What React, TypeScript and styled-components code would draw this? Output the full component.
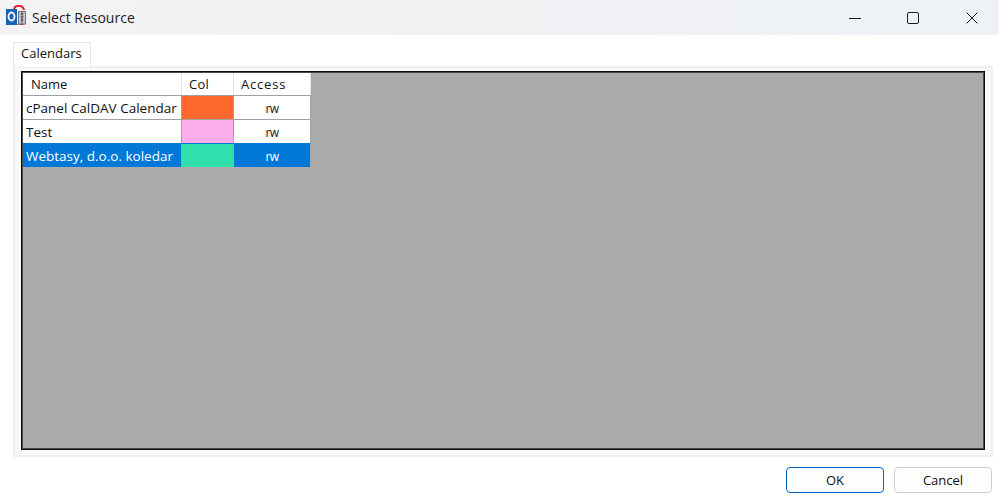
import React from "react";
import styled, { createGlobalStyle } from "styled-components";

const GlobalStyle = createGlobalStyle`
  html, body {
    margin: 0;
    padding: 0;
    background: #fff;
  }
  body {
    font-family: "Open Sans", "Liberation Sans", Arial, sans-serif;
  }
`;

const Dialog = styled.div`
  width: 999px;
  height: 498px;
  display: flex;
  flex-direction: column;
  overflow: hidden;
  background: #fff;
  color: #111;
`;

const TitleBar = styled.div`
  height: 35px;
  flex: none;
  display: flex;
  align-items: center;
  background: linear-gradient(90deg, #f3f3f3 0%, #f1f2f4 45%, #eef2f7 100%);
`;

const AppIcon = styled.svg`
  width: 20px;
  height: 20px;
  margin: 0 0 5px 6px;
  flex: none;
`;

const Title = styled.div`
  margin: 0 0 1px 6px;
  font-size: 14px;
  color: #1c1c1c;
  flex: 1;
`;

const WindowButton = styled.div<{ $gap: number }>`
  width: 46px;
  height: 35px;
  display: flex;
  align-items: center;
  justify-content: center;
  margin-right: ${(p) => p.$gap}px;
`;

const Content = styled.div`
  flex: 1;
  display: flex;
  flex-direction: column;
  padding: 7px 6px 0 13px;
  min-height: 0;
`;

const TabStrip = styled.div`
  display: flex;
  height: 24px;
  flex: none;
`;

const Tab = styled.div`
  width: 78px;
  height: 25px;
  box-sizing: border-box;
  border: 1px solid #e5e5e5;
  border-bottom: none;
  background: #fff;
  font-size: 13px;
  padding: 1px 0 0 7px;
  position: relative;
  z-index: 1;
`;

const TabPane = styled.div`
  height: 391px;
  box-sizing: border-box;
  flex: none;
  border: 2px solid #eeeeee;
  background: #f9f9f9;
  padding: 3px 6px 5px 6px;
`;

const GridArea = styled.div`
  height: 100%;
  box-sizing: border-box;
  border: 1px solid #0a0a0a;
  box-shadow: inset 0 0 0 1px #4a4a4a;
  padding: 1px;
  background: #ababab;
`;

const Table = styled.div`
  display: grid;
  grid-template-columns: 159px 52px 77px;
  grid-template-rows: 22px;
  grid-auto-rows: 24px;
  width: 288px;
`;

const HeaderCell = styled.div<{ $indent: number; $spacing?: number }>`
  box-sizing: border-box;
  background: #fff;
  border-right: 1px solid #e3e3e3;
  font-size: 13px;
  line-height: 22px;
  padding-left: ${(p) => p.$indent}px;
  letter-spacing: ${(p) => p.$spacing ?? 0}px;
`;

const NameCell = styled.div<{ $selected?: boolean }>`
  box-sizing: border-box;
  background: ${(p) => (p.$selected ? "#0078d7" : "#fff")};
  color: ${(p) => (p.$selected ? "#fff" : "#111")};
  border-top: 1px solid ${(p) => (p.$selected ? "#0078d7" : "#a0a0a0")};
  border-right: 1px solid #a0a0a0;
  font-size: 13.5px;
  line-height: 25px;
  padding-left: 3px;
  white-space: nowrap;
  overflow: hidden;
`;

const ColorCell = styled.div<{ $color: string; $selected?: boolean }>`
  box-sizing: border-box;
  background: ${(p) => p.$color};
  border-top: 1px solid ${(p) => (p.$selected ? "#0078d7" : "#a0a0a0")};
  border-right: 1px solid #a0a0a0;
`;

const AccessCell = styled.div<{ $selected?: boolean }>`
  box-sizing: border-box;
  background: ${(p) => (p.$selected ? "#0078d7" : "#fff")};
  color: ${(p) => (p.$selected ? "#fff" : "#111")};
  border-top: 1px solid ${(p) => (p.$selected ? "#0078d7" : "#a0a0a0")};
  border-right: 1px solid #a0a0a0;
  font-size: 12px;
  line-height: 25px;
  text-align: center;
  letter-spacing: -0.5px;
`;

const Footer = styled.div`
  display: flex;
  justify-content: flex-end;
  gap: 10px;
  padding: 10px 1px 0 0;
`;

const Button = styled.button<{ $primary?: boolean }>`
  width: 98px;
  height: 26px;
  box-sizing: border-box;
  padding: 0;
  border-radius: 4px;
  font-family: inherit;
  font-size: 13px;
  color: #111;
  background: #fdfdfd;
  border: 1px solid ${(p) => (p.$primary ? "#0067c0" : "#d0d0d0")};
`;

const calendars = [
  { name: "cPanel CalDAV Calendar", color: "#ff692d" },
  { name: "Test", color: "#fbaeec" },
  { name: "Webtasy, d.o.o. koledar", color: "#31e0ac", selected: true },
];

function CalendarRow({ name, color, selected }: { name: string; color: string; selected?: boolean }) {
  return (
    <>
      <NameCell $selected={selected}>{name}</NameCell>
      <ColorCell $color={color} $selected={selected} />
      <AccessCell $selected={selected}>rw</AccessCell>
    </>
  );
}

export default function App() {
  return (
    <Dialog>
      <GlobalStyle />
      <TitleBar>
        <AppIcon viewBox="0 0 20 20">
          <path d="M8 4 C9 -0.5 17 -0.5 18 5" fill="none" stroke="#e0202a" strokeWidth="2" />
          <path d="M8 19 C10 21 16 21 18 18" fill="none" stroke="#e0202a" strokeWidth="2" />
          <rect x="0" y="4" width="11" height="16" fill="#1a62b8" />
          <ellipse cx="5.5" cy="11.5" rx="3" ry="4" fill="none" stroke="#fff" strokeWidth="1.8" />
          <rect x="12.5" y="6.5" width="7" height="12.5" fill="#c9ccd0" stroke="#6a7078" strokeWidth="1" />
          <path d="M16 7 V18.5 M14.5 9 H17.5 M14.5 12 H17.5 M14.5 15 H17.5" stroke="#3e444c" strokeWidth="1" fill="none" />
        </AppIcon>
        <Title>Select Resource</Title>
        <WindowButton $gap={12}>
          <svg width="12" height="12" viewBox="0 0 12 12">
            <path d="M0 6.5 H12" stroke="#1a1a1a" strokeWidth="1" />
          </svg>
        </WindowButton>
        <WindowButton $gap={13}>
          <svg width="12" height="12" viewBox="0 0 12 12">
            <rect x="0.5" y="0.5" width="11" height="11" rx="1.5" fill="none" stroke="#1a1a1a" strokeWidth="1" />
          </svg>
        </WindowButton>
        <WindowButton $gap={4}>
          <svg width="12" height="12" viewBox="0 0 12 12">
            <path d="M0.5 0.5 L11.5 11.5 M11.5 0.5 L0.5 11.5" stroke="#1a1a1a" strokeWidth="1" />
          </svg>
        </WindowButton>
      </TitleBar>
      <Content>
        <TabStrip>
          <Tab>Calendars</Tab>
        </TabStrip>
        <TabPane>
          <GridArea>
            <Table>
              <HeaderCell $indent={8}>Name</HeaderCell>
              <HeaderCell $indent={7} $spacing={0.3}>Col</HeaderCell>
              <HeaderCell $indent={7} $spacing={0.8}>Access</HeaderCell>
              {calendars.map((c) => (
                <CalendarRow key={c.name} name={c.name} color={c.color} selected={c.selected} />
              ))}
            </Table>
          </GridArea>
        </TabPane>
        <Footer>
          <Button $primary>OK</Button>
          <Button>Cancel</Button>
        </Footer>
      </Content>
    </Dialog>
  );
}
